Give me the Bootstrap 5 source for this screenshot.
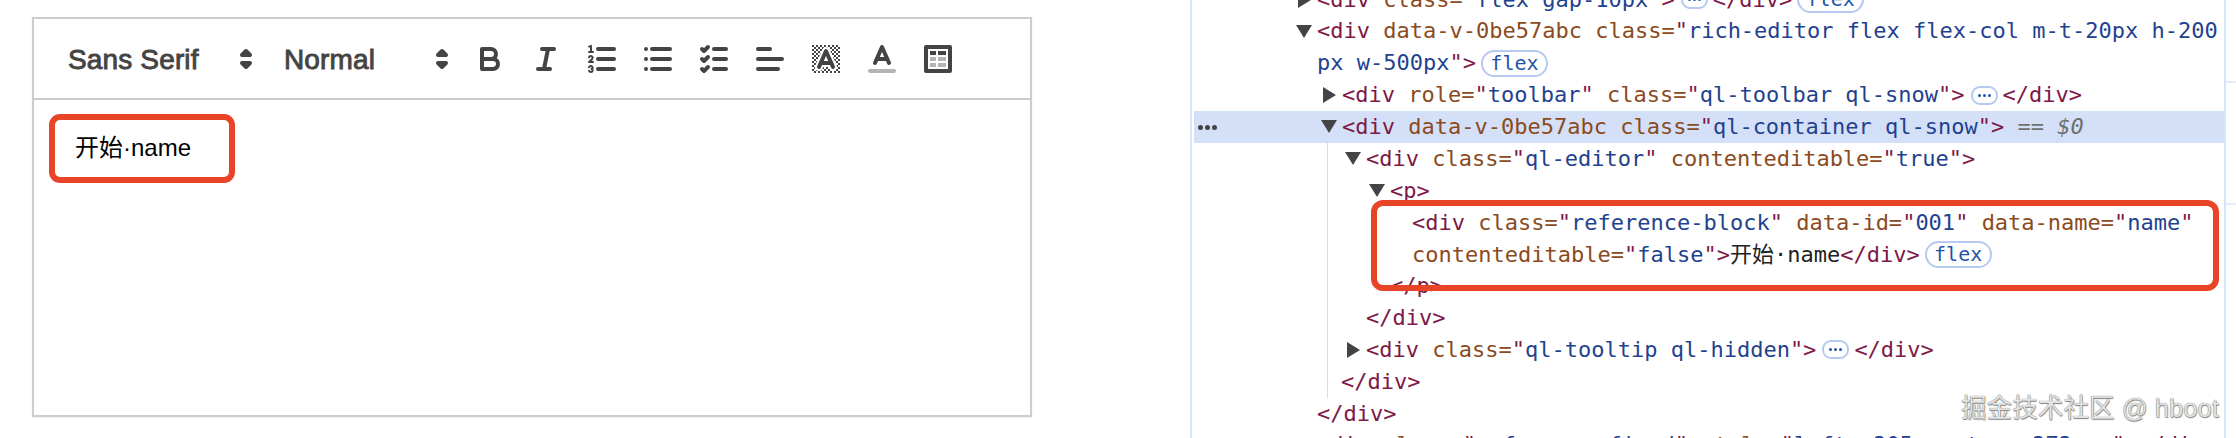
<!DOCTYPE html>
<html lang="zh">
<head>
<meta charset="utf-8">
<title>Quill reference block</title>
<link href="https://cdn.jsdelivr.net/npm/bootstrap@5.3.0/dist/css/bootstrap.min.css" rel="stylesheet">
<style>
html,body{margin:0;background:#fff}
.stage{width:2236px;height:438px}
.left-pane{width:1190px;flex:none;padding:17px 0 0 32px}
.qeditor{width:1000px;height:400px;border:2px solid #ccc;box-shadow:0 1px 2px rgba(0,0,0,.08)}
.qtoolbar{height:81px;border-bottom:2px solid #ccc;padding:16px 16px 0;font-family:"Liberation Sans",Arial,sans-serif;color:#444}
.picker-a{width:216px}
.picker-b{width:196px}
.picker-a,.picker-b{height:48px;padding-left:18px;padding-right:2px;font-size:28px;letter-spacing:.15px;-webkit-text-stroke:.9px #444;line-height:50px}
.qbtn{width:56px;height:48px;padding:6px 10px;border:0;border-radius:0;line-height:0}
.qbtn svg,.picker-a svg,.picker-b svg{width:36px;height:36px;display:block}
.picker-a svg,.picker-b svg{align-self:flex-start;margin-top:6px}
.st{fill:none;stroke:#444;stroke-width:2;stroke-linecap:round;stroke-linejoin:round}
.th{stroke-width:1}
.fi{fill:#444;stroke:none}
.fa{fill:#444;stroke:none;opacity:.4}
.sa{fill:none;stroke:#444;stroke-width:2;stroke-linecap:round;opacity:.4}
.halo{fill:none;stroke:#fff;stroke-width:4;stroke-linecap:round;stroke-linejoin:round}
.qbody{padding:30px 0 0 41px;font:24px/36px "Liberation Sans","Noto Sans CJK SC",Arial,sans-serif;color:#000}
.red-a{position:absolute;left:49px;top:114px;width:186px;height:69px;border:6px solid #e84427;border-radius:11px}
.red-b{position:absolute;left:1371px;top:200px;width:848px;height:91px;border:6px solid #e84427;border-radius:12px}
.devtools{width:1036px;flex:none;height:438px;border-left:2px solid #d6e4f7;border-right:2px solid #d6e4f7;padding-left:2px;font-family:"DejaVu Sans Mono","Noto Sans CJK SC",monospace;font-size:22px;color:#222}
.code-list{margin-top:-16.4px}
.dt-row{height:31.85px;white-space:pre;line-height:31.85px}
.dt-sel{background:#d3e0f8}
.t{color:#7e1846}.n{color:#8b4a20}.v{color:#1f428f}.g{color:#6f6f6f}.gi{color:#6f6f6f;font-style:italic}
.cjk{font-family:"Noto Sans CJK SC",sans-serif;letter-spacing:0}
.l0{padding-left:123px}.l1{padding-left:148px}
.guide{margin-left:133px;border-left:1px solid #d5dcee}
.g2{padding-left:38px}.g1{padding-left:13px}.g3{padding-left:62px}.g4{padding-left:84px}
.tri-d,.tri-r{flex:none;width:0;height:0;margin-left:-20px;margin-right:5px}
.tri-d{border-left:8px solid transparent;border-right:8px solid transparent;border-top:13px solid #444;margin-left:-21px}
.tri-r{border-top:8px solid transparent;border-bottom:8px solid transparent;border-left:13px solid #444;margin-left:-19px;margin-right:6px}
.chip{flex:none;margin-left:5px;height:27px;width:67px;border:2px solid #b7c9ef;border-radius:14px;color:#2552a8;font-size:20px;line-height:22px;text-align:center}
.chip-more{flex:none;margin:0 5px 0 6px;height:19px;width:27px;border:2px solid #b7c9ef;border-radius:9px;display:flex;align-items:center;justify-content:center;gap:2px}
.chip-more i{width:3px;height:3px;border-radius:50%;background:#2552a8}
.sel-dots{position:absolute;left:1198px;top:125px;display:flex;gap:2px}
.sel-dots i{width:5px;height:5px;border-radius:50%;background:#444}
.rail{flex:1;padding-top:81px}
.tick{height:2px;background:#e6edf8}
.tick-gap{height:120px}
.wm{position:absolute;left:1961px;top:392px;font:25.6px/32px "Liberation Sans","Noto Sans CJK SC",sans-serif;color:#e2e2e2;text-shadow:0 0 1px #555,.5px .5px 1px #888;white-space:pre}
</style>
</head>
<body>
<div class="stage d-flex position-relative overflow-hidden">
  <div class="left-pane">
    <div class="qeditor d-flex flex-column bg-white">
      <div class="qtoolbar d-flex">
        <div class="picker-a d-flex justify-content-between"><span>Sans Serif</span><svg viewBox="0 0 18 18"><polygon class="st" points="7 11 9 13 11 11 7 11"/><polygon class="st" points="7 7 9 5 11 7 7 7"/></svg></div>
        <div class="picker-b d-flex justify-content-between"><span>Normal</span><svg viewBox="0 0 18 18"><polygon class="st" points="7 11 9 13 11 11 7 11"/><polygon class="st" points="7 7 9 5 11 7 7 7"/></svg></div>
        <button class="btn qbtn" type="button" aria-label="bold"><svg viewBox="0 0 18 18"><path class="st" d="M5,4H9.5A2.5,2.5,0,0,1,12,6.5v0A2.5,2.5,0,0,1,9.5,9H5V4Z"/><path class="st" d="M5,9h5.5A2.5,2.5,0,0,1,13,11.5v0A2.5,2.5,0,0,1,10.5,14H5V9Z"/></svg></button>
        <button class="btn qbtn" type="button" aria-label="italic"><svg viewBox="0 0 18 18"><line class="st" x1="7" x2="13" y1="4" y2="4"/><line class="st" x1="5" x2="11" y1="14" y2="14"/><line class="st" x1="8" x2="10" y1="14" y2="4"/></svg></button>
        <button class="btn qbtn" type="button" aria-label="ordered list"><svg viewBox="0 0 18 18"><line class="st" x1="7" x2="15" y1="4" y2="4"/><line class="st" x1="7" x2="15" y1="9" y2="9"/><line class="st" x1="7" x2="15" y1="14" y2="14"/><line class="st th" x1="2.5" x2="4.5" y1="5.5" y2="5.5"/><path class="fi" d="M3.5,6A0.5,0.5,0,0,1,3,5.5V3.085l-0.276.138A0.5,0.5,0,0,1,2.053,3c-0.124-.247-0.023-0.324.224-0.447l1-.5A0.5,0.5,0,0,1,4,2.5v3A0.5,0.5,0,0,1,3.5,6Z"/><path class="st th" d="M4.5,10.5h-2c0-.234,1.85-1.076,1.85-2.234A0.959,0.959,0,0,0,2.5,8.156"/><path class="st th" d="M2.5,14.846a0.959,0.959,0,0,0,1.85-.109A0.7,0.7,0,0,0,3.75,14a0.688,0.688,0,0,0,.6-0.736,0.959,0.959,0,0,0-1.85-.109"/></svg></button>
        <button class="btn qbtn" type="button" aria-label="bullet list"><svg viewBox="0 0 18 18"><line class="st" x1="6" x2="15" y1="4" y2="4"/><line class="st" x1="6" x2="15" y1="9" y2="9"/><line class="st" x1="6" x2="15" y1="14" y2="14"/><line class="st" x1="3" x2="3" y1="4" y2="4"/><line class="st" x1="3" x2="3" y1="9" y2="9"/><line class="st" x1="3" x2="3" y1="14" y2="14"/></svg></button>
        <button class="btn qbtn" type="button" aria-label="check list"><svg viewBox="0 0 18 18"><line class="st" x1="9" x2="15" y1="4" y2="4"/><polyline class="st" points="3 4 4 5 6 3"/><line class="st" x1="9" x2="15" y1="14" y2="14"/><polyline class="st" points="3 14 4 15 6 13"/><line class="st" x1="9" x2="15" y1="9" y2="9"/><polyline class="st" points="3 9 4 10 6 8"/></svg></button>
        <button class="btn qbtn" type="button" aria-label="align"><svg viewBox="0 0 18 18"><line class="st" x1="3" x2="15" y1="9" y2="9"/><line class="st" x1="3" x2="13" y1="14" y2="14"/><line class="st" x1="3" x2="9" y1="4" y2="4"/></svg></button>
        <button class="btn qbtn" type="button" aria-label="background"><svg viewBox="0 0 18 18"><defs><pattern id="chk" width="2" height="2" patternUnits="userSpaceOnUse"><rect width="1" height="1" fill="#444"/><rect x="1" y="1" width="1" height="1" fill="#444"/></pattern></defs><rect x="2" y="2" width="14" height="14" fill="url(#chk)"/><polyline class="halo" points="5.5 13 9 5 12.5 13"/><line class="halo" x1="11.63" x2="6.38" y1="11" y2="11"/><polyline class="st" points="5.5 13 9 5 12.5 13"/><line class="st" x1="11.63" x2="6.38" y1="11" y2="11"/></svg></button>
        <button class="btn qbtn" type="button" aria-label="color"><svg viewBox="0 0 18 18"><line class="sa" x1="3" x2="15" y1="15" y2="15"/><polyline class="st" points="5.5 11 9 3 12.5 11"/><line class="st" x1="11.63" x2="6.38" y1="9" y2="9"/></svg></button>
        <button class="btn qbtn" type="button" aria-label="table"><svg viewBox="0 0 18 18"><rect class="st" height="12" width="12" x="3" y="3"/><rect class="fi" height="2" width="3" x="5" y="5"/><rect class="fi" height="2" width="4" x="9" y="5"/><rect class="fa" height="2" width="3" x="5" y="8"/><rect class="fa" height="2" width="4" x="9" y="8"/><rect class="fa" height="2" width="3" x="5" y="11"/><rect class="fa" height="2" width="4" x="9" y="11"/></svg></button>
      </div>
      <div class="qbody">开始·name</div>
    </div>
  </div>

  <div class="devtools overflow-hidden">
    <div class="code-list">
      <div class="dt-row d-flex align-items-center l0"><i class="tri-r"></i><span><span class="t">&lt;div</span> <span class="n">class=</span><span class="t">"</span><span class="v">flex gap-10px</span><span class="t">"&gt;</span></span><span class="chip-more"><i></i><i></i><i></i></span><span class="t">&lt;/div&gt;</span><span class="chip">flex</span></div>
      <div class="dt-row d-flex align-items-center l0"><i class="tri-d"></i><span><span class="t">&lt;div</span> <span class="n">data-v-0be57abc class=</span><span class="t">"</span><span class="v">rich-editor flex flex-col m-t-20px h-200</span></span></div>
      <div class="dt-row d-flex align-items-center l0"><span><span class="v">px w-500px</span><span class="t">"&gt;</span></span><span class="chip">flex</span></div>
      <div class="dt-row d-flex align-items-center l1"><i class="tri-r"></i><span><span class="t">&lt;div</span> <span class="n">role=</span><span class="t">"</span><span class="v">toolbar</span><span class="t">"</span> <span class="n">class=</span><span class="t">"</span><span class="v">ql-toolbar ql-snow</span><span class="t">"&gt;</span></span><span class="chip-more"><i></i><i></i><i></i></span><span class="t">&lt;/div&gt;</span></div>
      <div class="dt-row dt-sel d-flex align-items-center l1"><i class="tri-d"></i><span><span class="t">&lt;div</span> <span class="n">data-v-0be57abc class=</span><span class="t">"</span><span class="v">ql-container ql-snow</span><span class="t">"&gt;</span> <span class="g">==</span> <span class="gi">$0</span></span></div>
      <div class="guide">
        <div class="dt-row d-flex align-items-center g2"><i class="tri-d"></i><span><span class="t">&lt;div</span> <span class="n">class=</span><span class="t">"</span><span class="v">ql-editor</span><span class="t">"</span> <span class="n">contenteditable=</span><span class="t">"</span><span class="v">true</span><span class="t">"&gt;</span></span></div>
        <div class="dt-row d-flex align-items-center g3"><i class="tri-d"></i><span class="t">&lt;p&gt;</span></div>
        <div class="dt-row d-flex align-items-center g4"><span><span class="t">&lt;div</span> <span class="n">class=</span><span class="t">"</span><span class="v">reference-block</span><span class="t">"</span> <span class="n">data-id=</span><span class="t">"</span><span class="v">001</span><span class="t">"</span> <span class="n">data-name=</span><span class="t">"</span><span class="v">name</span><span class="t">"</span></span></div>
        <div class="dt-row d-flex align-items-center g4"><span><span class="n">contenteditable=</span><span class="t">"</span><span class="v">false</span><span class="t">"&gt;</span><span class="cjk">开始</span>·name<span class="t">&lt;/div&gt;</span></span><span class="chip">flex</span></div>
        <div class="dt-row d-flex align-items-center g3"><span class="t">&lt;/p&gt;</span></div>
        <div class="dt-row d-flex align-items-center g2"><span class="t">&lt;/div&gt;</span></div>
        <div class="dt-row d-flex align-items-center g2"><i class="tri-r"></i><span><span class="t">&lt;div</span> <span class="n">class=</span><span class="t">"</span><span class="v">ql-tooltip ql-hidden</span><span class="t">"&gt;</span></span><span class="chip-more"><i></i><i></i><i></i></span><span class="t">&lt;/div&gt;</span></div>
        <div class="dt-row d-flex align-items-center g1"><span class="t">&lt;/div&gt;</span></div>
      </div>
      <div class="dt-row d-flex align-items-center l0"><span class="t">&lt;/div&gt;</span></div>
      <div class="dt-row d-flex align-items-center l0"><span><span class="t">&lt;div</span> <span class="n">class=</span><span class="t">"</span><span class="v">reference-fixed</span><span class="t">"</span> <span class="n">style=</span><span class="t">"</span><span class="v">left: 205px; top: 272px;</span><span class="t">"&gt;&lt;/div&gt;</span></span></div>
    </div>
  </div>

  <div class="rail">
    <div class="tick"></div>
    <div class="tick-gap"></div>
    <div class="tick"></div>
  </div>

  <div class="sel-dots"><i></i><i></i><i></i></div>
  <div class="red-a"></div>
  <div class="red-b"></div>
  <div class="wm">掘金技术社区 @ hboot</div>
</div>
<script src="https://cdn.jsdelivr.net/npm/bootstrap@5.3.0/dist/js/bootstrap.bundle.min.js"></script>
</body>
</html>
